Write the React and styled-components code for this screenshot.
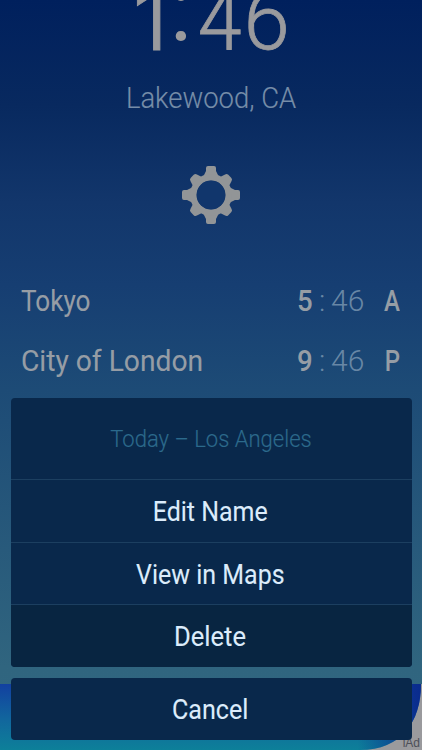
import React from "react";
import styled, { createGlobalStyle } from "styled-components";

const GlobalStyle = createGlobalStyle`
  * { box-sizing: border-box; }
  body { margin: 0; font-family: Roboto, "Liberation Sans", sans-serif; }
`;

const Screen = styled.main`
  position: relative;
  display: flex;
  flex-direction: column;
  width: 422px;
  height: 750px;
  overflow: hidden;
  background: linear-gradient(180deg, #00205d 0%, #08295f 14%, #12366b 27%, #163e72 38%, #1d4b76 52%, #30657f 89%, #316782 100%);
`;

const Label = styled.span`
  display: block;
  white-space: pre;
  font-size: ${(p) => p.$size}px;
  font-weight: ${(p) => p.$weight || 400};
  line-height: 1;
  color: ${(p) => p.$color};
  -webkit-text-stroke: ${(p) => p.$stroke || 0}px ${(p) => p.$color};
  transform: scaleX(${(p) => p.$stretch || 1});
  transform-origin: ${(p) => p.$origin || "center"};
`;

const Clock = styled.header`
  display: grid;
  grid-template-columns: 32px 31px 48px 46px;
  justify-content: center;
  justify-items: center;
  height: 86px;
  margin-top: -22px;
`;

const Digit = styled(Label)`
  -webkit-text-stroke: 0.8px #9a9a9d;
`;

const LeadingOne = styled(Digit)`
  font-family: Inter, sans-serif;
  padding: 1px 0 0 4px;
`;

const Colon = styled(Label)`
  margin-top: -15px;
  padding-left: 2px;
`;

const Location = styled.div`
  display: flex;
  justify-content: center;
  margin-top: 19px;
`;

const SettingsButton = styled.button`
  align-self: center;
  width: 60px;
  height: 60px;
  margin: 52px 0 0;
  padding: 0;
  border: 0;
  background: none;
  svg { display: block; }
`;

const CityList = styled.section`
  display: flex;
  flex-direction: column;
  margin-top: 46px;
`;

const CityRow = styled.div`
  display: grid;
  grid-template-columns: 1fr 22px 12px 36px 33px;
  align-items: center;
  height: 60px;
  padding: 0 22px 0 21px;
`;

const HalfDay = styled(Label)`
  justify-self: end;
`;

const Sheet = styled.section`
  position: absolute;
  left: 10.5px;
  right: 10.5px;
  bottom: 10px;
  display: flex;
  flex-direction: column;
  gap: 11px;
`;

const Panel = styled.div`
  display: flex;
  flex-direction: column;
  overflow: hidden;
  border-radius: 4px;
  background: #09284b;
`;

const SheetTitle = styled.div`
  display: flex;
  align-items: center;
  justify-content: center;
  height: 81px;
  padding-top: 1px;
`;

const Action = styled.button`
  display: flex;
  align-items: center;
  justify-content: center;
  height: ${(p) => p.$height}px;
  padding: 3px 2px 0 0;
  border: 0;
  border-top: ${(p) => (p.$divided ? "1px solid #1c3f60" : "0")};
  background: ${(p) => p.$fill || "#09284b"};
  font-family: inherit;
`;

const AdBanner = styled.aside`
  position: relative;
  flex: none;
  height: 66px;
  margin-top: auto;
  overflow: hidden;
  background: #9a9a9d;
`;

const AdArt = styled.svg`
  display: block;
`;

const AdMark = styled.span`
  position: absolute;
  right: 2px;
  bottom: 1px;
  font: 12px/12px "Liberation Sans", sans-serif;
  color: #4d4f58;
`;

const teeth = [0, 45, 90, 135, 180, 225, 270, 315];

function Gear() {
  return (
    <svg width="60" height="60" viewBox="-30 -30 60 60" fill="#929597">
      {teeth.map((angle) => (
        <path
          key={angle}
          transform={`rotate(${angle})`}
          d={angle % 90 ? "M-7-17-4.6-24.5Q-4.2-26.5-2-26.5H2Q4.2-26.5 4.6-24.5L7-17Z" : "M-8.5-17-5-24V-27Q-5-29-3-29H3Q5-29 5-27V-24L8.5-17Z"}
        />
      ))}
      <circle r="17.6" fill="none" stroke="#929597" strokeWidth="6.6" />
      <circle r="14.4" fill="#11366c" />
    </svg>
  );
}

const cities = [
  { name: "Tokyo", hour: "5", minute: "46", half: "A", stretch: 0.87 },
  { name: "City of London", hour: "9", minute: "46", half: "P", stretch: 0.94 },
];

const actions = [
  { text: "Edit Name", height: 63, stretch: 0.925 },
  { text: "View in Maps", height: 62, stretch: 0.925 },
  { text: "Delete", height: 63, stretch: 0.945, fill: "#082541" },
];

export default function App() {
  return (
    <>
      <GlobalStyle />
      <Screen>
        <Clock>
          <LeadingOne $size={83} $weight={300} $color="#9a9a9d" $stretch={1.12}>1</LeadingOne>
          <Colon $size={92} $weight={400} $color="#9a9a9d">:</Colon>
          <Digit $size={85} $weight={300} $color="#9a9a9d" $stretch={0.93}>4</Digit>
          <Digit $size={85} $weight={300} $color="#9a9a9d" $stretch={0.98}>6</Digit>
        </Clock>
        <Location>
          <Label $size={30} $weight={300} $stroke={0.15} $color="#768da8" $stretch={0.915}>Lakewood, CA</Label>
        </Location>
        <SettingsButton aria-label="Settings"><Gear /></SettingsButton>
        <CityList>
          {cities.map((city) => (
            <CityRow key={city.name}>
              <Label $size={30} $stroke={0.1} $color="#969da5" $origin="left" $stretch={city.stretch}>{city.name}</Label>
              <Label $size={30} $weight={500} $color="#969da5" $origin="left" $stretch={0.92}>{city.hour}</Label>
              <Label $size={30} $weight={300} $color="#6887a5" $origin="left">:</Label>
              <Label $size={30} $weight={300} $color="#6887a5" $origin="left">{city.minute}</Label>
              <HalfDay $size={30} $weight={500} $color="#969da5" $origin="right" $stretch={0.8}>{city.half}</HalfDay>
            </CityRow>
          ))}
        </CityList>
        <AdBanner>
          <AdArt width="422" height="66" viewBox="0 0 422 66">
            <defs>
              <linearGradient id="ad" x1="0" y1="0" x2="0" y2="1">
                <stop offset="0" stopColor="#1240a0" />
                <stop offset=".55" stopColor="#11679d" />
                <stop offset="1" stopColor="#0d8099" />
              </linearGradient>
              <linearGradient id="adEdge" x1="0.85" y1="0" x2="1" y2="0">
                <stop offset="0" stopColor="#0a2b8d" stopOpacity="0" />
                <stop offset="1" stopColor="#0a2b8d" />
              </linearGradient>
            </defs>
            <path d="M0 0H421C421 38 401 66 360 66H0Z" fill="url(#ad)" />
            <path d="M0 0H421C421 38 401 66 360 66H0Z" fill="url(#adEdge)" />
          </AdArt>
          <AdMark>iAd</AdMark>
        </AdBanner>
        <Sheet role="dialog">
          <Panel>
            <SheetTitle>
              <Label $size={24.5} $weight={300} $stroke={0.15} $color="#2c6a8c" $stretch={0.9}>Today – Los Angeles</Label>
            </SheetTitle>
            {actions.map((a) => (
              <Action key={a.text} $divided $height={a.height} $fill={a.fill}>
                <Label $size={27} $stroke={0.1} $color="#dcecfb" $stretch={a.stretch}>{a.text}</Label>
              </Action>
            ))}
          </Panel>
          <Panel>
            <Action $height={62}>
              <Label $size={27} $stroke={0.1} $color="#dcecfb" $stretch={0.93}>Cancel</Label>
            </Action>
          </Panel>
        </Sheet>
      </Screen>
    </>
  );
}
